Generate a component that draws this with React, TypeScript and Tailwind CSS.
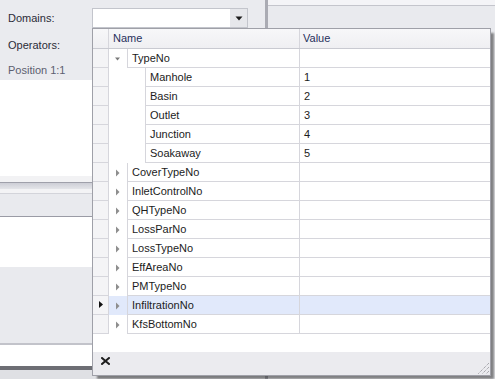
import React from "react";

type TreeRow = {
  name: string;
  level: 0 | 1;
  value?: string;
  expanded?: boolean;
  hasChildren?: boolean;
  selected?: boolean;
};

const rows: TreeRow[] = [
  { name: "TypeNo", level: 0, expanded: true, hasChildren: true },
  { name: "Manhole", level: 1, value: "1" },
  { name: "Basin", level: 1, value: "2" },
  { name: "Outlet", level: 1, value: "3" },
  { name: "Junction", level: 1, value: "4" },
  { name: "Soakaway", level: 1, value: "5" },
  { name: "CoverTypeNo", level: 0, hasChildren: true },
  { name: "InletControlNo", level: 0, hasChildren: true },
  { name: "QHTypeNo", level: 0, hasChildren: true },
  { name: "LossParNo", level: 0, hasChildren: true },
  { name: "LossTypeNo", level: 0, hasChildren: true },
  { name: "EffAreaNo", level: 0, hasChildren: true },
  { name: "PMTypeNo", level: 0, hasChildren: true },
  { name: "InfiltrationNo", level: 0, hasChildren: true, selected: true },
  { name: "KfsBottomNo", level: 0, hasChildren: true },
];

function ExpandGlyph({ expanded }: { expanded?: boolean }) {
  return (
    <svg width="18" height="18" viewBox="0 0 18 18">
      {expanded ? (
        <polygon points="6,8.5 11,8.5 8.5,11.5" fill="#7a7a7a" />
      ) : (
        <polygon points="7,6.5 10.5,10 7,13.5" fill="#8e8e8e" />
      )}
    </svg>
  );
}

function GridRow({ row }: { row: TreeRow }) {
  return (
    <div className={`flex h-[19px] ${row.selected ? "bg-[#e1e9fb]" : "bg-white"}`}>
      {/* row indicator */}
      <div className="w-[16px] shrink-0 border-r border-b border-[#d6d6dc] bg-[#f4f4f6]">
        {row.selected && (
          <svg width="15" height="18" viewBox="0 0 15 18">
            <polygon points="6,5 10,8.5 6,12" fill="#111" />
          </svg>
        )}
      </div>

      {/* name column with tree indent */}
      <div className="w-[190px] shrink-0 flex">
        <div className={`shrink-0 h-[19px] ${row.level === 0 ? "w-[18px]" : "w-[36px]"}`}>
          {row.hasChildren && <ExpandGlyph expanded={row.expanded} />}
        </div>
        <div className="flex-1 flex items-center pl-[4px] border-l border-b border-[#d6d6dc] text-[#1c1c1c]">
          {row.name}
        </div>
      </div>

      {/* value column */}
      <div className="w-[191px] shrink-0 flex items-center pl-[4px] border-l border-b border-[#d6d6dc] text-[#1c1c1c]">
        {row.value}
      </div>
    </div>
  );
}

export default function App() {
  return (
    <div className="relative w-[495px] h-[379px] overflow-hidden flex bg-[#e9eaee] font-['Liberation_Sans',Arial,sans-serif] text-[11px] leading-none">
      {/* Left pane */}
      <div className="w-[265px] shrink-0 flex flex-col">
        <div className="h-[80px] bg-[#eaebef] flex flex-col">
          <div className="mt-[8px] h-[20px] flex items-center">
            <span className="w-[92px] pl-[8px] text-[#2b2c38]">Domains:</span>
            <div className="w-[156px] h-[20px] flex border border-[#c3c5cc] bg-white">
              <div className="flex-1" />
              <div className="w-[17px] flex items-center justify-center bg-[#e6e7eb]">
                <svg width="8" height="5" viewBox="0 0 8 5">
                  <polygon points="0.5,0.5 7.5,0.5 4,4.5" fill="#1a1a1a" />
                </svg>
              </div>
            </div>
          </div>
          <div className="mt-[7px] h-[20px] flex items-center pl-[8px] text-[#2b2c38]">Operators:</div>
          <div className="mt-[5px] h-[20px] flex items-center pl-[8px] text-[#5c5f70]">Position 1:1</div>
        </div>
        <div className="h-[96px] bg-white" />
        <div className="h-[6px] bg-[#f2f2f4]" />
        <div className="h-[1px] bg-[#9fa0aa]" />
        <div className="h-[6px] bg-gradient-to-b from-[#cdced6] to-[#e4e5e9]" />
        <div className="h-[4px] bg-[#f3f3f5]" />
        <div className="h-[1px] bg-[#d3d4da]" />
        <div className="h-[22px] bg-[#e9eaee]" />
        <div className="h-[1px] bg-[#9a9ba5]" />
        <div className="h-[50px] bg-white" />
        <div className="h-[76px] bg-[#e9eaee]" />
        <div className="h-[2px] bg-[#c2c3ca]" />
        <div className="h-[21px] bg-white" />
        <div className="h-[4px] bg-[#6d6e74]" />
        <div className="flex-1 bg-[#dfe0e4]" />
      </div>

      {/* Splitter */}
      <div className="w-[3px] shrink-0 bg-[#aaabb3]" />

      {/* Right pane */}
      <div className="flex-1 flex flex-col">
        <div className="h-[5px] bg-[#f4f4f7]" />
        <div className="h-[1px] bg-[#c4c5cc]" />
        <div className="flex-1 bg-[#e9eaee]" />
      </div>

      {/* Dropdown popup */}
      <div className="absolute left-[92px] top-[28px] w-[399px] h-[348px] flex flex-col border border-[#9fa0a8] bg-white shadow-[4px_4px_2px_-1px_rgba(0,0,0,0.45)]">
        {/* header */}
        <div className="flex h-[20px] shrink-0 border-b border-[#c9cad1] bg-gradient-to-b from-[#f7f7f9] to-[#efeff2] text-[#27305c]">
          <div className="w-[16px] shrink-0 border-r border-[#d6d6dc]" />
          <div className="w-[190px] shrink-0 flex items-center pl-[4px]">Name</div>
          <div className="w-[191px] shrink-0 flex items-center pl-[3px] border-l border-[#d6d6dc]">Value</div>
        </div>

        {rows.map((row) => (
          <GridRow key={row.name} row={row} />
        ))}

        <div className="flex-1 bg-white" />

        {/* footer */}
        <div className="h-[23px] shrink-0 flex justify-between bg-[#ebebef]">
          <svg className="ml-[8px] mt-[5px]" width="9" height="8" viewBox="0 0 9 8">
            <path d="M1 1 L8 7 M8 1 L1 7" stroke="#1e1e1e" strokeWidth="2" strokeLinecap="square" />
          </svg>
          <svg className="self-end" width="13" height="13" viewBox="0 0 13 13">
            <path
              d="M12 1 L1 12 M12 5 L5 12 M12 9 L9 12"
              stroke="#8c8c92"
              strokeWidth="1"
              strokeDasharray="1 1"
            />
          </svg>
        </div>
      </div>
    </div>
  );
}
